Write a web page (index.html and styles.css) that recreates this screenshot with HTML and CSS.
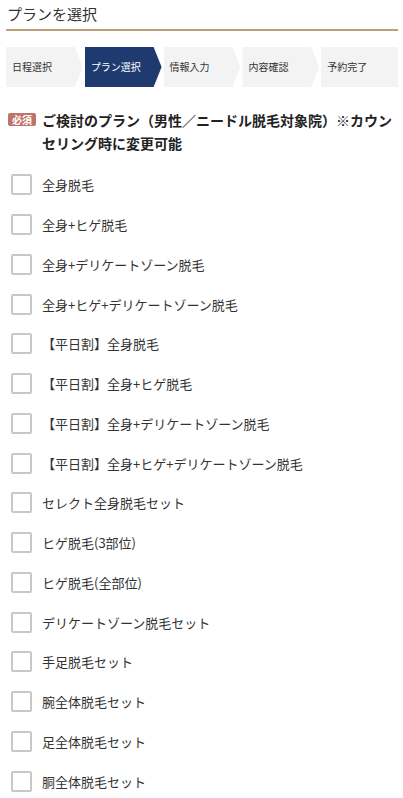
FILE: index.html
```html
<!DOCTYPE html>
<html lang="ja">
<head>
<meta charset="utf-8">
<link rel="stylesheet" href="styles.css">
</head>
<body>
<div class="page">
  <h2 class="title">プランを選択</h2>
  <ol class="steps">
    <li class="step">日程選択</li>
    <li class="step active">プラン選択</li>
    <li class="step">情報入力</li>
    <li class="step">内容確認</li>
    <li class="step last">予約完了</li>
  </ol>
  <div class="question">
    <span class="badge">必須</span>
    <span class="qtext">ご検討のプラン（男性／ニードル脱毛対象院）※カウンセリング時に変更可能</span>
  </div>
  <ul class="options">
    <li class="option"><span class="box"></span><span class="label">全身脱毛</span></li>
    <li class="option"><span class="box"></span><span class="label">全身+ヒゲ脱毛</span></li>
    <li class="option"><span class="box"></span><span class="label">全身+デリケートゾーン脱毛</span></li>
    <li class="option"><span class="box"></span><span class="label">全身+ヒゲ+デリケートゾーン脱毛</span></li>
    <li class="option"><span class="box"></span><span class="label">【平日割】全身脱毛</span></li>
    <li class="option"><span class="box"></span><span class="label">【平日割】全身+ヒゲ脱毛</span></li>
    <li class="option"><span class="box"></span><span class="label">【平日割】全身+デリケートゾーン脱毛</span></li>
    <li class="option"><span class="box"></span><span class="label">【平日割】全身+ヒゲ+デリケートゾーン脱毛</span></li>
    <li class="option"><span class="box"></span><span class="label">セレクト全身脱毛セット</span></li>
    <li class="option"><span class="box"></span><span class="label">ヒゲ脱毛(3部位)</span></li>
    <li class="option"><span class="box"></span><span class="label">ヒゲ脱毛(全部位)</span></li>
    <li class="option"><span class="box"></span><span class="label">デリケートゾーン脱毛セット</span></li>
    <li class="option"><span class="box"></span><span class="label">手足脱毛セット</span></li>
    <li class="option"><span class="box"></span><span class="label">腕全体脱毛セット</span></li>
    <li class="option"><span class="box"></span><span class="label">足全体脱毛セット</span></li>
    <li class="option"><span class="box"></span><span class="label">胴全体脱毛セット</span></li>
  </ul>
</div>
</body>
</html>
```

FILE: styles.css
```css
* { box-sizing: border-box; }
html, body { margin: 0; padding: 0; background: #fff; }
body {
  font-family: "Noto Sans CJK JP", "Noto Sans", sans-serif;
  color: #333;
}
.page { padding: 0 5px 0 6px; }
.title {
  margin: 0;
  padding: 4px 0 5px 1px;
  font-size: 15px;
  font-weight: 400;
  line-height: 20px;
  color: #333;
  border-bottom: 2px solid #b8a078;
}
.steps {
  list-style: none;
  margin: 16px 0 0;
  padding: 0;
  display: flex;
  gap: 2px;
  height: 40px;
}
.step {
  flex: 1;
  background: #f3f3f3;
  font-size: 10px;
  line-height: 40px;
  padding-left: 6px;
  color: #333;
  clip-path: polygon(0 0, calc(100% - 8px) 0, 100% 50%, calc(100% - 8px) 100%, 0 100%);
}
.step.active { background: #1f3a6e; color: #fff; }
.step.last { clip-path: none; }
.question {
  display: flex;
  align-items: flex-start;
  margin-top: 22px;
  padding-left: 2px;
}
.badge {
  flex: none;
  background: #c0736a;
  color: #fff;
  font-size: 10px;
  font-weight: 700;
  line-height: 13px;
  padding: 0;
  margin-top: 4px;
  border-radius: 2px;
  width: 28px;
  text-align: center;
}
.qtext {
  margin-left: 6px;
  font-size: 14px;
  font-weight: 700;
  line-height: 23px;
  color: #222;
}
.options {
  list-style: none;
  margin: 10px 0 0;
  padding: 0 0 0 5px;
}
.option {
  display: flex;
  align-items: center;
  height: 39.75px;
}
.box {
  flex: none;
  width: 21px;
  height: 21px;
  border: 2px solid #c8c8c8;
  border-radius: 2px;
  background: #fff;
}
.label {
  margin-left: 10px;
  font-size: 13px;
  color: #333;
}
```
